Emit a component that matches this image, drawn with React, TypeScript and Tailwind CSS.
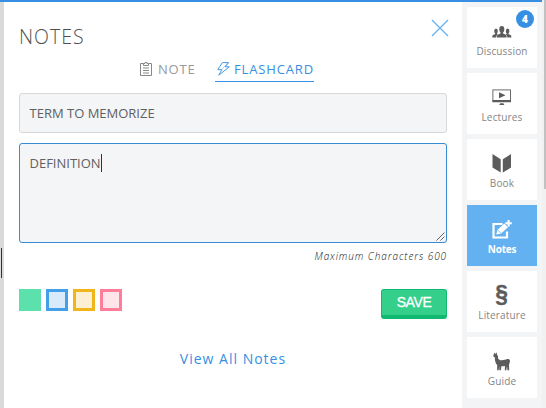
import type { ReactNode } from "react";

type Item = { label: string; icon: ReactNode; active?: boolean; badge?: number };

const DiscussionIcon = () => (
  <svg width="20" height="12" viewBox="0 0 20 12" fill="currentColor">
    <ellipse cx="9.800" cy="3.300" rx="2.500" ry="3.200" />
    <path d="M8.500 5h2.600v2.400l2.700 1.300c.6.300.8.800.8 1.500v1.300H5v-1.300c0-.7.2-1.200.8-1.500l2.700-1.300z" />
    <ellipse cx="4" cy="4.900" rx="1.800" ry="2.500" />
    <path d="M3.200 6h1.800v2L6 8.500c-1.300.6-1.700 1.300-1.700 3H.3V10c0-.6.3-.9.800-1.100l2.100-.8z" />
    <ellipse cx="15.600" cy="4.900" rx="1.800" ry="2.500" />
    <path d="M16.400 6h-1.800v2l-1 .5c1.300.6 1.700 1.300 1.700 3h4V10c0-.6-.3-.9-.8-1.100l-2.100-.8z" />
  </svg>
);

const LecturesIcon = () => (
  <svg width="20" height="17" viewBox="0 0 20 17" fill="currentColor">
    <rect x=".9" y=".9" width="17.600" height="11.500" fill="none" stroke="currentColor" strokeWidth=".9" />
    <path d="M.5 11h18.500v2.300H.5zM7 3.300l6.500 3-6.500 3zM8.200 14.200h3.200l1 1.800H7.200z" />
  </svg>
);

const BookIcon = () => (
  <svg width="20" height="19" viewBox="0 0 20 19" fill="currentColor">
    <path d="M.5 0l8.200 5.200v13.300L.5 13.600zM19 0l-8.200 5.200v13.300l8.200-4.900z" />
  </svg>
);

const NotesIcon = () => (
  <svg width="20" height="19" viewBox="0 0 20 19" fill="currentColor">
    <path d="M10.500 4H1.500v13.500h13.500v-6" fill="none" stroke="currentColor" strokeWidth="2.200" />
    <path d="M4.200 14.500l1.200-4.500 6.900-6.500 3.700 3.700-6.900 6.300z" />
    <path d="M6 10.300l2.700 2.700" stroke="#64b1f2" strokeWidth=".8" />
    <path d="M15.600 0h2v2.200h2.200v2h-2.200v2.300h-2V4.200h-2.200v-2h2.200z" />
  </svg>
);

const GuideIcon = () => (
  <svg width="18" height="19" viewBox="0 0 18 19" fill="currentColor">
    <path d="M1.600.6L2.500 2 3.700.3l.3 2.500 1 1.200v2.500l2 1.800c2 .2 4-.9 6.200-.9 1.200-.6 3.500-.4 3.700 1.200.3 1.900-.8 3.100-.9 4.100l.2 5.600h-1.700l-.5-4-.7 4h-1.500l.2-4.300c-1.200.3-2.300.2-3.500 0L7.900 18.300H6.300l-.1-4.300-.6 4.300H4.100l.1-5.300C2.200 11.200 1.900 8 1.800 5.200L.3 4.400l.2-1.300z" />
  </svg>
);

const items: Item[] = [
  { label: "Discussion", icon: <DiscussionIcon />, badge: 4 },
  { label: "Lectures", icon: <LecturesIcon /> },
  { label: "Book", icon: <BookIcon /> },
  { label: "Notes", icon: <NotesIcon />, active: true },
  {
    label: "Literature",
    icon: (
      <span className="-mt-[5px] scale-x-95 font-['Liberation_Sans',sans-serif] text-[24px] font-bold leading-[19px] [-webkit-text-stroke:0.400px_#5c5c5c]">
        §
      </span>
    ),
  },
  { label: "Guide", icon: <GuideIcon /> },
];

const swatches = [
  "border-[#5ce0ac] bg-[#5ce0ac]",
  "border-[#429fe8] bg-[#d9ebfb]",
  "border-[#f0b51a] bg-[#fcefd2]",
  "border-[#ff7d98] bg-[#ffe4e9]",
];

function SideCard({ label, icon, active, badge }: Item) {
  return (
    <div
      className={`relative flex h-[61px] shrink-0 flex-col items-center pt-[15px] ${
        active ? "bg-[#64b1f2] text-white" : "bg-white text-[#5c5c5c]"
      }`}
    >
      <div className="flex h-[19px] items-center">{icon}</div>
      <span
        className={`mt-[3px] text-[10px] leading-[14px] ${
          active ? "font-bold tracking-[-0.2px] text-white" : "tracking-[0.150px] text-[#858585]"
        }`}
      >
        {label}
      </span>
      {badge && (
        <span className="absolute right-[3px] top-[3px] flex size-[18px] items-center justify-center rounded-full bg-[#368fe2] text-[10px] font-extrabold text-white">
          {badge}
        </span>
      )}
    </div>
  );
}

export default function App() {
  return (
    <div className="flex h-[408px] w-[546px] overflow-hidden bg-white font-['Open_Sans','Noto_Sans',sans-serif]">
      <div className="flex w-[542px] flex-col">
        <div className="h-[2px] shrink-0 bg-[#368fe2]" />
        <div className="flex min-h-0 flex-1">
          <div className="w-1 bg-[#dadada] pt-[246px]">
            <div className="ml-px h-[30px] w-px bg-[#333]" />
          </div>
          <main className="flex w-[458px] flex-col pl-[15px] pr-[15px]">
            <header className="flex h-[55px] shrink-0 justify-between">
              <h1 className="pt-[20px] text-[19.5px] font-light leading-[29px] tracking-[1px] text-[#505050]">NOTES</h1>
              <svg className="mt-[17px] -mr-[2px]" width="18" height="18" viewBox="0 0 18 18" stroke="#66b1ee" strokeWidth="1.300">
                <path d="M1 1l16 16M17 1L1 17" />
              </svg>
            </header>
            <nav className="flex h-[25px] shrink-0 pl-[121px] text-[13px] leading-[24px]">
              <div className="flex w-[75px] text-[#999]">
                <svg className="mt-[5px] mr-[5px]" width="13" height="14" viewBox="0 0 13 14" fill="none" stroke="#888">
                  <path d="M3.500 1.500h-3v12h11v-12h-3M3.500 3.500v-2h1.500v-1h2v1h1.500v2zM3 6h6M3 8.500h6M3 11h6" />
                </svg>
                <span className="tracking-[0.8px]">NOTE</span>
              </div>
              <div className="flex w-[99px] border-b border-[#368fe2] pl-[2px] text-[#368fe2]">
                <svg className="mt-[5px] mr-[4px]" width="13" height="14" viewBox="0 0 13 14" fill="none" stroke="currentColor" strokeWidth=".9">
                  <path d="M5.300 .600h6.200L8.300 4.800h4L1.800 13.200l3-5.500H.8z" />
                  <path d="M11 .600L4.800 7.700" strokeWidth=".4" />
                </svg>
                <span className="tracking-[0.850px]">FLASHCARD</span>
              </div>
            </nav>
            <div className="mt-[11px] h-10 shrink-0 rounded-[3px] border border-[#d8d8d8] bg-[#f4f5f7] pl-[9.5px] text-[13px] leading-[38px] text-[#606060]">
              TERM TO MEMORIZE
            </div>
            <div className="mt-[10px] flex h-[100px] shrink-0 justify-between rounded-[3px] border border-[#368bd1] bg-[#f4f5f7] pl-[9.5px] text-[13px] leading-[18px] text-[#606060]">
              <div className="flex pt-[10px]">
                <span>DEFINITION</span>
                <span className="h-[18px] w-px bg-[#333]" />
              </div>
              <svg className="mr-px mb-px self-end" width="9" height="9" viewBox="0 0 9 9" stroke="#555" strokeWidth=".9">
                <path d="M.5 8.500l8-8M4.500 8.500l4-4" />
              </svg>
            </div>
            <p className="mt-[5px] h-[17px] shrink-0 text-right text-[10px] font-light italic leading-[17px] tracking-[0.920px] text-[#111]">
              Maximum Characters 600
            </p>
            <div className="mt-[24px] flex h-[30px] shrink-0 justify-between">
              <div className="flex gap-[5px]">
                {swatches.map((s) => (
                  <span key={s} className={`size-[22px] border-[3px] ${s}`} />
                ))}
              </div>
              <button className="h-[30px] w-[66px] rounded-[3px] border border-b-[4px] border-[#0fb970] bg-[#34d08b] font-['Liberation_Sans',sans-serif] text-[14px] leading-[25px] tracking-[-0.4px] text-white [-webkit-text-stroke:0.300px_white]">
                SAVE
              </button>
            </div>
            <a className="mt-[30px] text-center text-[14px] leading-[20px] tracking-[1px] text-[#368fe2]">View All Notes</a>
          </main>
          <aside className="flex w-20 flex-col gap-[5px] bg-[#f3f4f6] px-[5px] pt-[5px]">
            {items.map((item) => (
              <SideCard key={item.label} {...item} />
            ))}
          </aside>
        </div>
      </div>
      <div className="w-1 bg-[#f1f1f1] pl-[2px]">
        <div className="h-[189px] bg-[#c1c1c1]" />
      </div>
    </div>
  );
}
